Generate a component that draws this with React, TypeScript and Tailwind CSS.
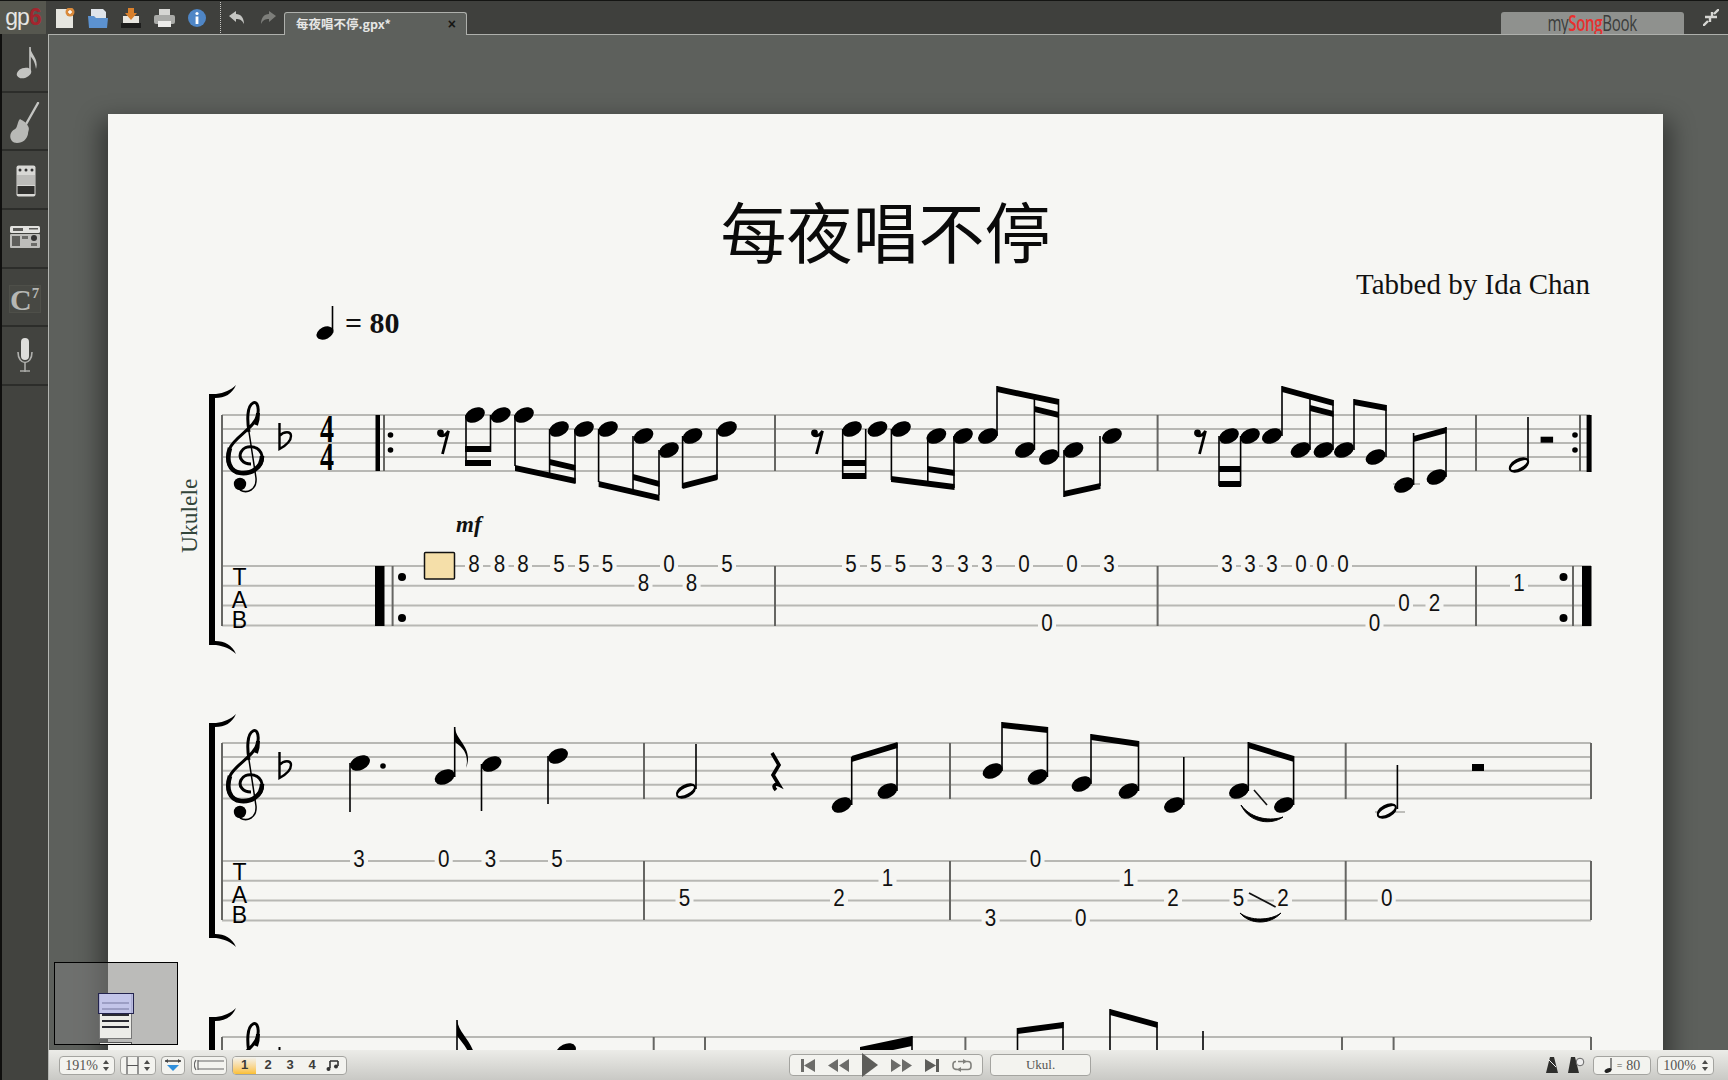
import type { ReactNode } from "react"

const SERIF = "Liberation Serif, serif"
const SANS = "Liberation Sans, Arial, sans-serif"
const LINE = "#b8b8b4"
const BAR = "#666663"
const PAPER = "#f6f6f3"

type Head = [number, number]
type Beam = [number, number, number, number, number?]

function NoteHead({ x, y, rx = 10.5, ry = 7 }: { x: number; y: number; rx?: number; ry?: number }) {
  return <ellipse cx={x} cy={y} rx={rx} ry={ry} transform={`rotate(-26 ${x} ${y})`} fill="#000" />
}

function HalfHead({ x, y }: { x: number; y: number }) {
  return (
    <g transform={`rotate(-28 ${x} ${y})`}>
      <ellipse cx={x} cy={y} rx={11} ry={6.5} fill="#000" />
      <ellipse cx={x} cy={y} rx={9} ry={3} fill={PAPER} />
    </g>
  )
}

function Stem({ x, y1, y2 }: { x: number; y1: number; y2: number }) {
  return <line x1={x} x2={x} y1={y1} y2={y2} stroke="#000" strokeWidth={1.6} />
}

function BeamBar({ b, t }: { b: Beam; t?: number }) {
  const [x1, y1, x2, y2, own = 6] = b
  const h = t ?? own
  return <polygon points={`${x1},${y1} ${x2},${y2} ${x2},${y2 + h} ${x1},${y1 + h}`} fill="#000" />
}

function Staff({ y, dy, x1 = 222, x2 = 1591 }: { y: number; dy: number; x1?: number; x2?: number }) {
  return (
    <g stroke={LINE} strokeWidth={2}>
      {[0, 1, 2, 3, 4].map((i) => (
        <line key={i} x1={x1} x2={x2} y1={y + i * dy} y2={y + i * dy} />
      ))}
    </g>
  )
}

function TabLines({ y }: { y: number }) {
  return (
    <g stroke={LINE} strokeWidth={2}>
      {[0, 1, 2, 3].map((i) => (
        <line key={i} x1={222} x2={1591} y1={y + i * 19.8} y2={y + i * 19.8} />
      ))}
    </g>
  )
}

// the string sits at y + 3
function Fret({ x, y, n }: { x: number; y: number; n: string }) {
  return (
    <g>
      <rect x={x - 9} y={y} width={18} height={6} fill={PAPER} />
      <text
        transform={`translate(${x} ${y + 8.5}) scale(0.86 1)`}
        textAnchor="middle"
        fontSize={24}
        fill="#111"
        fontFamily={SANS}
      >
        {n}
      </text>
    </g>
  )
}

function Bracket({ top, bottom }: { top: number; bottom: number }) {
  return (
    <path
      d={`M209 ${top} H216 C224 ${top - 1} 231 ${top - 4} 236 ${top - 9} C232 ${top} 225 ${top + 4} 215 ${top + 4} V${bottom - 4} C225 ${bottom - 4} 232 ${bottom} 236 ${bottom + 9} C231 ${bottom + 4} 224 ${bottom + 1} 216 ${bottom} H209 Z`}
      fill="#000"
    />
  )
}

// clef is placed with y = top of its box, 88px tall
function Clef({ y }: { y: number }) {
  return (
    <g transform={`translate(0 ${y - 402})`} fill="none" stroke="#000">
      <path
        d="M251 464 C243 464 238 458 241 452 C245 444 260 445 262 456 C264 468 251 474 241 473 C229 472 225 460 230 448 C235 436 256 428 258 413 C259 405 256 401 253 403 C247 406 247 420 249 432"
        strokeWidth={3}
      />
      <path d="M249 432 L256 478 C257 490 247 494 240 490" strokeWidth={1.5} />
      <path d="M230 448 C226 460 229 472 241 473 C251 474 262 468 262 456" strokeWidth={4.6} />
      <path d="M256 425 C258 420 258 416 258 413" strokeWidth={4} />
      <circle cx={240} cy={484} r={6.2} fill="#000" stroke="none" />
    </g>
  )
}

function Flat({ y }: { y: number }) {
  return (
    <path
      d={`M279.5 ${y} V${y + 26} C285 ${y + 23} 291 ${y + 18} 291 ${y + 13} C291 ${y + 8} 284 ${y + 8} 279.5 ${y + 13}`}
      fill="none"
      stroke="#000"
      strokeWidth={2.4}
    />
  )
}

function EighthRest({ x }: { x: number }) {
  return (
    <g>
      <circle cx={x - 3} cy={433} r={3.4} fill="#000" />
      <path d={`M${x - 4} 435 C${x - 1} 437 ${x + 3} 435 ${x + 5} 431 L${x - 1} 454`} fill="none" stroke="#000" strokeWidth={2.8} />
    </g>
  )
}

function ThinBar({ x, y1, y2 }: { x: number; y1: number; y2: number }) {
  return <line x1={x} x2={x} y1={y1} y2={y2} stroke={BAR} strokeWidth={2} />
}

const s1Heads: Head[] = [
  [475, 415], [500.7, 415], [524, 415], [559, 429], [584, 429], [608, 429], [643.5, 436], [669, 450], [692.5, 436], [727, 429],
  [852, 429], [877.5, 429], [901, 429], [936.4, 436], [963, 436], [988, 436], [1025, 450], [1049, 457], [1073.5, 450], [1112, 436],
  [1229, 436], [1250, 436], [1272, 436], [1300.6, 450], [1323.6, 450], [1344, 450], [1375.6, 457], [1404, 485], [1436.6, 477],
]

const s1Stems: [number, number, number][] = [
  [466, 415, 466], [490.5, 415, 452], [515, 415, 466], [549.6, 429, 478], [575, 429, 483], [598.6, 429, 482], [633, 436, 490], [659, 450, 495],
  [682.6, 436, 488], [717, 429, 479], [842.7, 429, 479], [865.7, 429, 479], [891.4, 429, 480], [927.8, 436, 484], [954, 436, 488],
  [997, 386, 436], [1034.4, 396, 450], [1058.5, 399, 457], [1064, 450, 497], [1100, 436, 486],
  [1219, 436, 486], [1240.6, 436, 486], [1282, 386, 436], [1310, 395, 450], [1333, 400, 450], [1354, 399, 450], [1386, 405, 457], [1413.6, 433, 485], [1446, 427, 477],
]

const s1Beams: Beam[] = [
  [465, 446, 491, 446], [465, 460, 491, 460],
  [515, 465, 575.5, 478], [549.6, 459, 575.5, 465],
  [598.6, 481, 659.5, 495], [633, 474, 659.5, 481],
  [682.6, 483, 717.5, 474],
  [842, 460, 866, 460], [842, 473, 866, 473],
  [891, 476, 954.5, 484], [927.8, 466, 954.5, 470],
  [997, 386, 1059, 399], [1034.4, 406, 1059, 412],
  [1064, 491, 1100.5, 483],
  [1219, 466, 1241, 466], [1219, 481, 1241, 481],
  [1282, 386, 1333.5, 400], [1310, 405, 1333.5, 411],
  [1354, 399, 1386.5, 405],
  [1413.6, 436, 1446.5, 427],
]

const t1Frets: [number, number, string][] = [
  [474, 0, "8"], [499.5, 0, "8"], [523, 0, "8"], [559, 0, "5"], [584, 0, "5"], [607.6, 0, "5"], [643.5, 1, "8"], [669, 0, "0"], [691.6, 1, "8"], [727, 0, "5"],
  [851, 0, "5"], [876, 0, "5"], [900.5, 0, "5"], [937, 0, "3"], [963, 0, "3"], [987, 0, "3"], [1024, 0, "0"], [1047, 3, "0"], [1072, 0, "0"], [1109, 0, "3"],
  [1227, 0, "3"], [1250, 0, "3"], [1272, 0, "3"], [1301, 0, "0"], [1322, 0, "0"], [1343, 0, "0"], [1374.5, 3, "0"], [1404, 2, "0"], [1434.5, 2, "2"], [1519, 1, "1"],
]

const s2Heads: Head[] = [
  [360, 763], [444.7, 777], [491.5, 764], [558, 756], [841.7, 805], [887.5, 791], [992.7, 771], [1037.6, 777],
  [1081.6, 784], [1128.6, 791], [1174, 805], [1239, 791], [1284, 805],
]

const s2Stems: [number, number, number][] = [
  [350, 763, 812], [454.7, 727, 777], [481.5, 764, 811], [548, 756, 804], [851.7, 757, 805], [897, 743, 791],
  [1002, 722, 771], [1047.4, 727, 777], [1091, 734, 784], [1138.5, 741, 791], [1183.8, 757, 805], [1248.3, 742, 791], [1293.6, 756, 805],
]

const s2Beams: Beam[] = [
  [851.7, 756, 897.5, 742],
  [1002, 722, 1048, 727],
  [1091, 734, 1139, 741],
  [1248.3, 742, 1294, 756],
]

const t2Frets: [number, number, string][] = [
  [359, 0, "3"], [443.7, 0, "0"], [490.5, 0, "3"], [557, 0, "5"], [684.5, 2, "5"], [839, 2, "2"], [887.5, 1, "1"],
  [990.6, 3, "3"], [1035.5, 0, "0"], [1080.8, 3, "0"], [1128.6, 1, "1"], [1173, 2, "2"], [1238.5, 2, "5"], [1283, 2, "2"], [1386.7, 2, "0"],
]

function Score() {
  return (
    <svg viewBox="108 301 1555 749" className="block w-[1555px] h-[749px]">
      {/* tempo */}
      <NoteHead x={325} y={333} rx={9} ry={6} />
      <Stem x={332.5} y1={306} y2={333} />
      <text x={345} y={333} fontFamily={SERIF} fontWeight="bold" fontSize={30} fill="#111">
        = 80
      </text>

      {/* system 1 */}
      <text transform="translate(197 553) rotate(-90)" fontFamily={SERIF} fontSize={23.5} fill="#33453a">
        Ukulele
      </text>
      <Bracket top={394} bottom={645} />
      <Staff y={415} dy={14} x2={1590} />
      <TabLines y={566} />
      <ThinBar x={222} y1={415} y2={626} />
      <Clef y={402} />
      <Flat y={423} />
      <text x={320} y={442} fontFamily={SERIF} fontWeight="bold" fontSize={40} textLength={14} lengthAdjust="spacingAndGlyphs">4</text>
      <text x={320} y={470} fontFamily={SERIF} fontWeight="bold" fontSize={40} textLength={14} lengthAdjust="spacingAndGlyphs">4</text>
      <rect x={375.5} y={415} width={4.5} height={56} fill="#000" />
      <ThinBar x={384} y1={415} y2={471} />
      <circle cx={390.5} cy={435} r={2.8} fill="#000" />
      <circle cx={390.5} cy={450} r={2.8} fill="#000" />
      <rect x={375} y={566} width={9.5} height={60} fill="#000" />
      <ThinBar x={392.6} y1={566} y2={626} />
      <circle cx={402} cy={577} r={4} fill="#000" />
      <circle cx={402} cy={618} r={4} fill="#000" />
      {[775, 1157.6, 1476].map((x) => (
        <g key={x}>
          <ThinBar x={x} y1={415} y2={471} />
          <ThinBar x={x} y1={566} y2={626} />
        </g>
      ))}
      <ThinBar x={1580} y1={415} y2={471} />
      <rect x={1586.6} y={415} width={5} height={57} fill="#000" />
      <circle cx={1575} cy={435} r={2.8} fill="#000" />
      <circle cx={1575} cy={450} r={2.8} fill="#000" />
      <ThinBar x={1573} y1={566} y2={626} />
      <rect x={1582} y={566} width={9.5} height={60} fill="#000" />
      <circle cx={1563.5} cy={577} r={4} fill="#000" />
      <circle cx={1563.5} cy={618} r={4} fill="#000" />
      <EighthRest x={443.5} />
      <EighthRest x={817.5} />
      <EighthRest x={1200.5} />
      <line x1={1393} x2={1420} y1={484} y2={484} stroke={LINE} strokeWidth={1.8} />
      {s1Stems.map(([x, a, b]) => <Stem key={x} x={x} y1={a} y2={b} />)}
      {s1Beams.map((b, i) => <BeamBar key={i} b={b} />)}
      {s1Heads.map(([x, y]) => <NoteHead key={x} x={x} y={y} />)}
      <HalfHead x={1519} y={465} />
      <Stem x={1528} y1={417} y2={463} />
      <rect x={1540.6} y={436.7} width={12.5} height={6} fill="#000" />
      <text x={456} y={532} fontFamily={SERIF} fontWeight="bold" fontStyle="italic" fontSize={23} fill="#111">
        mf
      </text>
      <text x={239.5} y={585} textAnchor="middle" fontFamily={SANS} fontSize={23}>T</text>
      <text x={239.5} y={607.5} textAnchor="middle" fontFamily={SANS} fontSize={23}>A</text>
      <text x={239.5} y={628} textAnchor="middle" fontFamily={SANS} fontSize={23}>B</text>
      <rect x={424.5} y={552.5} width={30} height={26.5} fill="#f5dfa9" stroke="#111" strokeWidth={1.5} rx={1} />
      {t1Frets.map(([x, s, n]) => <Fret key={x} x={x} y={563 + s * 19.8} n={n} />)}

      {/* system 2 */}
      <Bracket top={723} bottom={938} />
      <Staff y={743} dy={13.9} />
      <TabLines y={861} />
      <ThinBar x={222} y1={743} y2={920} />
      <Clef y={730} />
      <Flat y={752} />
      {[644, 950, 1345.7, 1591].map((x) => (
        <g key={x}>
          <ThinBar x={x} y1={743} y2={799} />
          <ThinBar x={x} y1={861} y2={920} />
        </g>
      ))}
      <line x1={1375} x2={1405} y1={812} y2={812} stroke={LINE} strokeWidth={1.8} />
      {s2Stems.map(([x, a, b]) => <Stem key={x} x={x} y1={a} y2={b} />)}
      {s2Beams.map((b, i) => <BeamBar key={i} b={b} />)}
      {s2Heads.map(([x, y]) => <NoteHead key={x} x={x} y={y} />)}
      <circle cx={383} cy={766} r={2.8} fill="#000" />
      <path d="M454.7 727 C456 741 474 748 466 768 C470 752 460 746 454.7 742 Z" fill="#000" />
      <HalfHead x={686} y={791} />
      <Stem x={696} y1={744} y2={789} />
      <path d="M772 753 L779 765 L773 775 L779 785 C775 783 772 786 776 790" fill="none" stroke="#000" strokeWidth={3.6} />
      <line x1={1254} y1={790} x2={1267} y2={805} stroke="#111" strokeWidth={1.6} />
      <path d="M1241 805 C1250 824 1272 825 1283 817 C1272 821 1252 820 1241 805 Z" fill="#000" stroke="#000" />
      <HalfHead x={1386.8} y={811} />
      <Stem x={1397.4} y1={765} y2={809} />
      <rect x={1472} y={764} width={12} height={7} fill="#000" />
      <text x={239.5} y={880} textAnchor="middle" fontFamily={SANS} fontSize={23}>T</text>
      <text x={239.5} y={902.5} textAnchor="middle" fontFamily={SANS} fontSize={23}>A</text>
      <text x={239.5} y={923} textAnchor="middle" fontFamily={SANS} fontSize={23}>B</text>
      {t2Frets.map(([x, s, n]) => <Fret key={x} x={x} y={858 + s * 19.8} n={n} />)}
      <line x1={1249} y1={893} x2={1275.6} y2={907} stroke="#111" strokeWidth={1.8} />
      <path d="M1240 913 C1250 925 1270 925 1281 913 C1270 921 1250 921 1240 913 Z" fill="#000" stroke="#000" />

      {/* system 3, cut off by the status bar */}
      <Bracket top={1017} bottom={1100} />
      <Staff y={1037} dy={13.9} />
      <ThinBar x={222} y1={1037} y2={1060} />
      <Clef y={1023} />
      <line x1={279.5} x2={279.5} y1={1047} y2={1060} stroke="#000" strokeWidth={2} />
      <Stem x={457} y1={1020} y2={1060} />
      <path d="M457 1020 C459 1034 472 1040 476 1060 L471 1060 C469 1050 462 1042 457 1036 Z" fill="#000" />
      <NoteHead x={566} y={1051} />
      <BeamBar b={[860, 1047, 912, 1036, 10]} />
      <Stem x={912} y1={1036} y2={1060} />
      <Stem x={1017.5} y1={1028} y2={1060} />
      <Stem x={1063} y1={1022} y2={1060} />
      <BeamBar b={[1017.5, 1028, 1063.5, 1022, 6]} />
      <Stem x={1110} y1={1009} y2={1060} />
      <Stem x={1157} y1={1022} y2={1060} />
      <BeamBar b={[1110, 1009, 1157.5, 1022, 6]} />
      <Stem x={1203} y1={1031} y2={1060} />
      {[653.7, 705, 965.4, 1342, 1393.6, 1591].map((x) => (
        <ThinBar key={x} x={x} y1={1037} y2={1060} />
      ))}
    </svg>
  )
}

function Icon({ w, h, children }: { w: number; h: number; children: ReactNode }) {
  return (
    <svg width={w} height={h} viewBox={`0 0 ${w} ${h}`} className="block shrink-0">
      {children}
    </svg>
  )
}

function Sideitem({ children }: { children: ReactNode }) {
  return (
    <div className="h-[58.7px] shrink-0 flex items-center justify-center border-b-2 border-[#2c2d2a]">
      {children}
    </div>
  )
}

function TopBar() {
  return (
    <div className="h-[34px] shrink-0 flex items-stretch bg-[#3f403d] border-t border-[#141513] relative">
      <div className="w-[46px] flex items-center justify-center bg-[#56574f] text-[23px] tracking-[-1px] font-['Liberation_Sans'] leading-none">
        <span className="text-[#e6e6e4]">gp</span>
        <span className="text-[#a3252e] font-bold">6</span>
      </div>
      <div className="ml-[9px] flex items-center gap-[13px]">
        <Icon w={20} h={20}>
          <rect x={1} y={1} width={17} height={19} fill="#e6e6e0" />
          <circle cx={15} cy={4} r={4.5} fill="#d98a3c" />
          <path d="M13 4h4M15 2v4" stroke="#fff" strokeWidth={1.4} />
        </Icon>
        <Icon w={20} h={20}>
          <path d="M3 1h12l3 3v8H3z" fill="#dfe4ea" />
          <path d="M0 8h6l2 2h12l-1 10H1z" fill="#5c92d0" />
        </Icon>
        <Icon w={20} h={20}>
          <path d="M2 8h16v7H2z" fill="#e8e6e0" />
          <path d="M7 0h6v5h3l-6 7-6-7h3z" fill="#d9802c" />
          <rect x={0} y={15} width={20} height={5} fill="#1d1d1c" />
        </Icon>
        <Icon w={21} h={20}>
          <rect x={5} y={1} width={11} height={6} fill="#d6d6d3" />
          <rect x={0} y={7} width={21} height={9} rx={2} fill="#a9aaa7" />
          <rect x={4} y={13} width={13} height={6} fill="#ececea" />
        </Icon>
        <Icon w={18} h={18}>
          <circle cx={9} cy={9} r={9} fill="#4f86c6" />
          <circle cx={9} cy={4.5} r={1.6} fill="#fff" />
          <rect x={7.6} y={7.5} width={2.8} height={7.5} fill="#fff" />
        </Icon>
      </div>
      <div className="ml-[14px] my-[1px] border-l border-dotted border-[#c8c8c4]" />
      <div className="ml-[8px] flex items-center gap-[17px]">
        <Icon w={15} h={13}>
          <path d="M0 5 L7 0 V3 C12 3 15 7 15 13 C13 9 11 8 7 8 V11 Z" fill="#c4c5c2" />
        </Icon>
        <Icon w={15} h={13}>
          <path d="M15 5 L8 0 V3 C3 3 0 7 0 13 C2 9 4 8 8 8 V11 Z" fill="#7d7e7a" />
        </Icon>
      </div>
      <div className="ml-[8px] mt-[11px] w-[183px] h-[23px] flex items-center justify-between pl-[11px] pr-[10px] bg-[#5d605c] border border-b-0 border-[#aeb0ac] rounded-t-[3px] -mb-[1px] z-10">
        <span className="text-[12.5px] font-bold text-[#e6e6e4] font-['Noto_Sans_CJK_SC',sans-serif] leading-none">每夜唱不停.gpx*</span>
        <span className="text-[14px] font-bold text-[#161614] font-['Liberation_Sans'] leading-none">×</span>
      </div>
      <div className="ml-auto mr-[44px] mt-[11px] w-[183px] h-[22px] flex items-center justify-center bg-[#8f918e] rounded-t-[3px] text-[#3b3d3b] leading-none">
        <span className="text-[21px] scale-x-[0.72] tracking-[-0.5px] font-['Open_Sans',sans-serif] whitespace-nowrap">
          my<span className="text-[#e8302e] font-semibold">Song</span>Book
        </span>
      </div>
      <div className="absolute right-[9px] top-[8px]">
        <Icon w={16} h={17}>
          <path d="M16 0 L11 5 M9 3V8H14 M0 17 L5 12 M2 8H7V13" stroke="#d6d6d3" strokeWidth={2.4} fill="none" />
        </Icon>
      </div>
    </div>
  )
}

function Sidebar() {
  return (
    <div className="w-[49px] shrink-0 flex flex-col bg-[#42433f] border-l-2 border-l-[#0f0f0e] border-r border-r-[#b4b6b2]">
      <Sideitem>
        <div className="ml-[3px] -mt-[1px]">
          <Icon w={22} h={34}>
            <ellipse cx={8} cy={28} rx={7.5} ry={5} fill="#c4c5c2" transform="rotate(-20 8 28)" />
            <path d="M14 2 V28" stroke="#c4c5c2" strokeWidth={1.6} />
            <path d="M14 2 C15 10 23 13 20 24 C19 16 16 13 14 11 Z" fill="#c4c5c2" />
          </Icon>
        </div>
      </Sideitem>
      <Sideitem>
        <div className="mt-[3px]">
          <Icon w={30} h={42}>
            <path d="M28 1 L15 24" stroke="#c4c5c2" strokeWidth={2.4} strokeLinecap="round" />
            <path d="M10 17 C13 19 15 19 18 24 C20 27 18 29 18 32 C17 37 13 41 7 41 C1 41 -1 35 1 31 C3 27 6 28 7 24 C8 21 8 19 10 17 Z" fill="#b8b9b6" />
          </Icon>
        </div>
      </Sideitem>
      <Sideitem>
        <div className="mt-[3px] ml-[1px]">
          <Icon w={20} h={32}>
            <rect x={0.5} y={0.5} width={19} height={31} rx={2} fill="#d8d8d5" />
            <circle cx={4} cy={5} r={1.5} fill="#333" />
            <circle cx={10} cy={5} r={1.5} fill="#333" />
            <circle cx={16} cy={5} r={1.5} fill="#333" />
            <rect x={1.5} y={21} width={17} height={8} fill="#2f2f2d" />
            <rect x={1} y={10} width={18} height={10} fill="#bcbcb9" />
          </Icon>
        </div>
      </Sideitem>
      <Sideitem>
        <Icon w={30} h={24}>
          <rect x={0} y={0} width={30} height={7} rx={1.5} fill="#e2e2df" />
          <rect x={3} y={2} width={10} height={3} fill="#5a5a57" />
          <rect x={19} y={2} width={9} height={1.5} fill="#5a5a57" />
          <rect x={0} y={8} width={30} height={14} rx={1} fill="#bdbdba" />
          <rect x={2} y={10} width={8} height={10} fill="#5e5e5b" />
          <rect x={12} y={10} width={6} height={3} fill="#6b6b68" />
          <circle cx={24} cy={12} r={3} fill="#333" />
          <rect x={21} y={17} width={6} height={3} fill="#6b6b68" />
        </Icon>
      </Sideitem>
      <Sideitem>
        <div className="w-[32px] h-[28px] mt-[4px] flex items-start leading-none font-['Liberation_Serif'] text-[#b6b7b4] border border-[#4e4f49] bg-[#474843]">
          <span className="text-[30px] font-bold leading-[28px]">C</span>
          <span className="text-[15px] font-bold leading-[15px]">7</span>
        </div>
      </Sideitem>
      <Sideitem>
        <Icon w={16} h={36}>
          <rect x={4} y={0} width={8} height={22} rx={4} fill="#dededb" />
          <path d="M1 14 C1 28 15 28 15 14" stroke="#b0b1ae" strokeWidth={1.6} fill="none" />
          <path d="M8 25 V34 M3 33 H13" stroke="#a9aaa7" strokeWidth={1.6} />
        </Icon>
      </Sideitem>
    </div>
  )
}

function Pill({ className, children }: { className: string; children?: ReactNode }) {
  return (
    <div className={`h-[19px] flex items-center border border-[#a4a4a0] rounded-[4px] bg-[#f3f3ef] shrink-0 ${className}`}>
      {children}
    </div>
  )
}

function Spin() {
  return (
    <Icon w={6} h={11}>
      <path d="M3 0 L6 4 H0 Z M3 11 L0 7 H6 Z" fill="#4c4c4a" />
    </Icon>
  )
}

function StatusBar() {
  return (
    <div className="h-[30px] shrink-0 flex items-center bg-gradient-to-b from-[#ecece8] to-[#c9c9c5] font-['Liberation_Serif'] text-[#555552] relative">
      <div className="ml-[10px] flex items-center gap-[5px]">
        <Pill className="w-[56px] justify-center gap-[5px] text-[14px]">
          191% <Spin />
        </Pill>
        <Pill className="w-[36px] justify-center gap-[5px]">
          <Icon w={13} h={17}>
            <path d="M1 0 V17 M12 0 V17 M1 8.5 H12" stroke="#555" strokeWidth={1.2} />
          </Icon>
          <Spin />
        </Pill>
        <Pill className="w-[24px] justify-center">
          <Icon w={16} h={13}>
            <path d="M0 2 H16" stroke="#444" strokeWidth={1.5} />
            <path d="M0 2 L3 0 V4 Z M16 2 L13 0 V4 Z" fill="#444" />
            <path d="M2 6 H14 L8 12 Z" fill="#2f8fdc" />
          </Icon>
        </Pill>
        <Pill className="w-[36px] justify-center ml-[1px]">
          <Icon w={30} h={12}>
            <path d="M2 1 C0 4 0 8 2 11 M4 1 V11 M4 2 H30 M4 10 H30" stroke="#666" strokeWidth={1.2} fill="none" />
          </Icon>
        </Pill>
        <Pill className="w-[115px] overflow-hidden font-['Liberation_Sans'] font-bold text-[13px] text-[#3c3c3a]">
          <span className="w-[23px] h-full flex items-center justify-center bg-gradient-to-b from-[#f3f3ef] to-[#fbc02d]">1</span>
          <span className="w-[22px] ml-[1px] text-center">2</span>
          <span className="w-[22px] text-center">3</span>
          <span className="w-[22px] text-center">4</span>
          <span className="ml-[2px] flex">
            <Icon w={14} h={13}>
              <path d="M5 2 H13 M5 2 V9 M13 2 V7" stroke="#333" strokeWidth={1.6} />
              <circle cx={3.5} cy={10} r={2} fill="#333" />
              <circle cx={11} cy={7.5} r={2} fill="#333" />
            </Icon>
          </span>
        </Pill>
      </div>
      <Pill className="absolute left-[740px] h-[22px] w-[194px] justify-center gap-[13px]">
        <Icon w={14} h={13}>
          <path d="M0 0 H3 V13 H0 Z M14 0 V13 L3 6.5 Z" fill="#6c6c69" />
        </Icon>
        <Icon w={21} h={13}>
          <path d="M10 0 V13 L0 6.5 Z M21 0 V13 L11 6.5 Z" fill="#6c6c69" />
        </Icon>
        <Icon w={16} h={24}>
          <path d="M0 0 L16 12 L0 24 Z" fill="#5d5d5a" />
        </Icon>
        <Icon w={21} h={13}>
          <path d="M0 0 V13 L10 6.5 Z M11 0 V13 L21 6.5 Z" fill="#6c6c69" />
        </Icon>
        <Icon w={14} h={13}>
          <path d="M0 0 L11 6.5 L0 13 Z M11 0 H14 V13 H11 Z" fill="#5d5d5a" />
        </Icon>
        <Icon w={20} h={13}>
          <path d="M6 2.5 H16 Q19 2.5 19 5.5 V7.5 Q19 10.5 16 10.5 H6 Q1 10.5 1 7.5 V5.5 Q1 2.5 4 2.5" stroke="#80807c" strokeWidth={1.6} fill="none" />
          <path d="M11 0 L15 2.5 L11 5 Z M9 8 L5 10.5 L9 13 Z" fill="#80807c" />
        </Icon>
      </Pill>
      <Pill className="absolute left-[941px] h-[22px] w-[101px] justify-center text-[13px]">Ukul.</Pill>
      <div className="absolute left-[1497px] flex items-center">
        <Icon w={12} h={16}>
          <path d="M4 0 H8 L12 16 H0 Z" fill="#2e2e2c" />
          <path d="M2 2 L10 10" stroke="#eee" strokeWidth={1} />
        </Icon>
      </div>
      <div className="absolute left-[1519px] flex items-center">
        <Icon w={17} h={16}>
          <path d="M3 0 H7 L11 16 H0 Z" fill="#2e2e2c" />
          <circle cx={12} cy={5} r={3.8} fill="#eee" stroke="#666" />
        </Icon>
      </div>
      <Pill className="absolute left-[1544px] w-[58px] justify-center gap-[4px] text-[14px]">
        <Icon w={9} h={15}>
          <ellipse cx={4} cy={12.5} rx={3.6} ry={2.2} fill="#222" transform="rotate(-20 4 12.5)" />
          <path d="M7 0 V12" stroke="#222" />
        </Icon>
        <span className="text-[10px]">=</span> 80
      </Pill>
      <Pill className="absolute left-[1608px] w-[57px] justify-center gap-[6px] text-[14px]">
        100% <Spin />
      </Pill>
    </div>
  )
}

function Minimap() {
  return (
    <div className="absolute left-[5px] top-[928px] w-[124px] h-[83px] border border-black bg-[#808080]/50 z-10 overflow-hidden">
      <div className="absolute left-[44px] top-[30px] w-[33px] h-[46px] bg-[#ecece8] flex flex-col gap-[4px] pt-[8px] px-[2px] border border-[#777]">
        {[0, 1, 2, 3, 4].map((i) => (
          <div key={i} className="h-[2px] bg-[#2a2a32]" />
        ))}
      </div>
      <div className="absolute left-[43px] top-[30px] w-[36px] h-[21px] bg-[#b9bce8]/80 border border-[#23234e]" />
      <div className="absolute left-[44px] top-[79px] w-[33px] h-[4px] bg-[#ecece8] border border-[#555]" />
    </div>
  )
}

export default function App() {
  return (
    <div className="w-[1728px] h-[1080px] flex flex-col overflow-hidden bg-[#5d605c]">
      <TopBar />
      <div className="flex-1 flex min-h-0">
        <Sidebar />
        <div className="flex-1 flex flex-col min-w-0 relative">
          <div className="flex-1 min-h-0 overflow-hidden border-t border-[#aeb0ac] pl-[59px] pt-[79px] bg-[#5d605c]">
            <div className="w-[1555px] h-[1000px] bg-[#f6f6f3] shadow-[0_14px_22px_8px_rgba(0,0,0,0.42)] pt-[82px]">
              <h1 className="h-[66px] text-center text-[66px] leading-[66px] text-[#0a0a0a] font-['Noto_Sans_CJK_TC',sans-serif]">每夜唱不停</h1>
              <p className="mt-[5px] pr-[73px] h-[34px] text-right text-[29px] leading-[34px] text-[#111] font-['Liberation_Serif']">Tabbed by Ida Chan</p>
              <Score />
            </div>
          </div>
          <Minimap />
          <StatusBar />
        </div>
      </div>
    </div>
  )
}
